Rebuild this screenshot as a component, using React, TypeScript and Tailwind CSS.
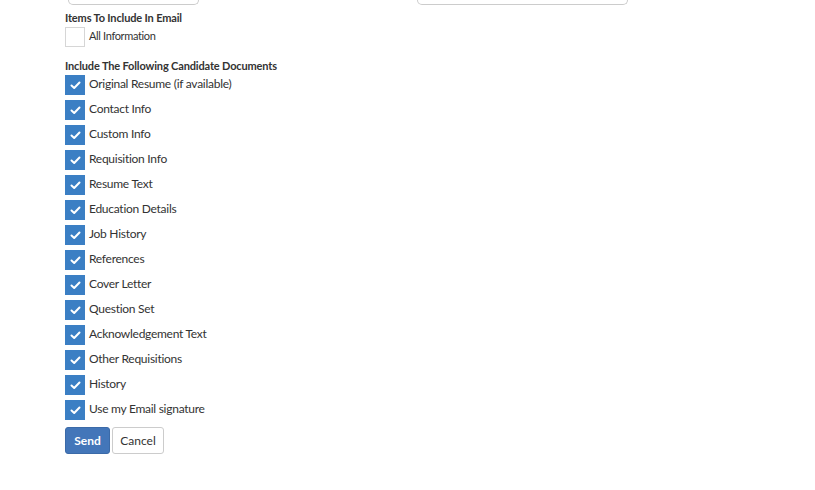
import React from "react";

const items = [
  "Original Resume (if available)",
  "Contact Info",
  "Custom Info",
  "Requisition Info",
  "Resume Text",
  "Education Details",
  "Job History",
  "References",
  "Cover Letter",
  "Question Set",
  "Acknowledgement Text",
  "Other Requisitions",
  "History",
  "Use my Email signature",
];

function Check() {
  return (
    <div className="w-[20px] h-[20px] bg-[#3b7fc4] flex items-center justify-center shrink-0">
      <svg width="11" height="9" viewBox="0 0 11 9" fill="none">
        <polyline points="1.5,4.5 4.2,7 9.5,1.5" stroke="white" strokeWidth="2" strokeLinecap="round" strokeLinejoin="round" />
      </svg>
    </div>
  );
}

export default function App() {
  return (
    <div className="w-[815px] h-[490px] bg-white text-[#333] overflow-hidden" style={{ fontFamily: "Lato, 'Open Sans', sans-serif" }}>
      <div className="flex pl-[68px]">
        <div className="w-[131px] h-[5px] border border-t-0 border-[#cccccc] rounded-b-[5px]" />
        <div className="ml-[218px] w-[211px] h-[5px] border border-t-0 border-[#cccccc] rounded-b-[5px]" />
      </div>
      <div className="pl-[65px]">
        <div className="mt-[6px] text-[11px] leading-[14px] font-bold tracking-[-0.15px]">Items To Include In Email</div>
        <div className="mt-[2px] flex items-start h-[20px]">
          <div className="w-[20px] h-[20px] border border-[#d6d6d6] bg-white shrink-0" />
          <span className="ml-[4px] mt-[2px] text-[11px] leading-[14px] tracking-[-0.35px]">All Information</span>
        </div>
        <div className="mt-[12px] text-[11px] leading-[14px] font-bold tracking-[-0.15px]">Include The Following Candidate Documents</div>
        <div className="mt-[2px] flex flex-col gap-[5px]">
          {items.map((t) => (
            <div key={t} className="flex items-start h-[20px]">
              <Check />
              <span className="ml-[4px] mt-[1px] text-[12px] leading-[16px] tracking-[-0.27px]">{t}</span>
            </div>
          ))}
        </div>
        <div className="mt-[7px] flex gap-[2px]">
          <button className="w-[45px] h-[27px] bg-[#4376b9] text-white text-[12px] font-bold rounded-[3px] border border-[#3b6aa8]">Send</button>
          <button className="w-[52px] h-[27px] bg-white text-[#333] text-[12px] rounded-[3px] border border-[#cccccc]">Cancel</button>
        </div>
      </div>
    </div>
  );
}
